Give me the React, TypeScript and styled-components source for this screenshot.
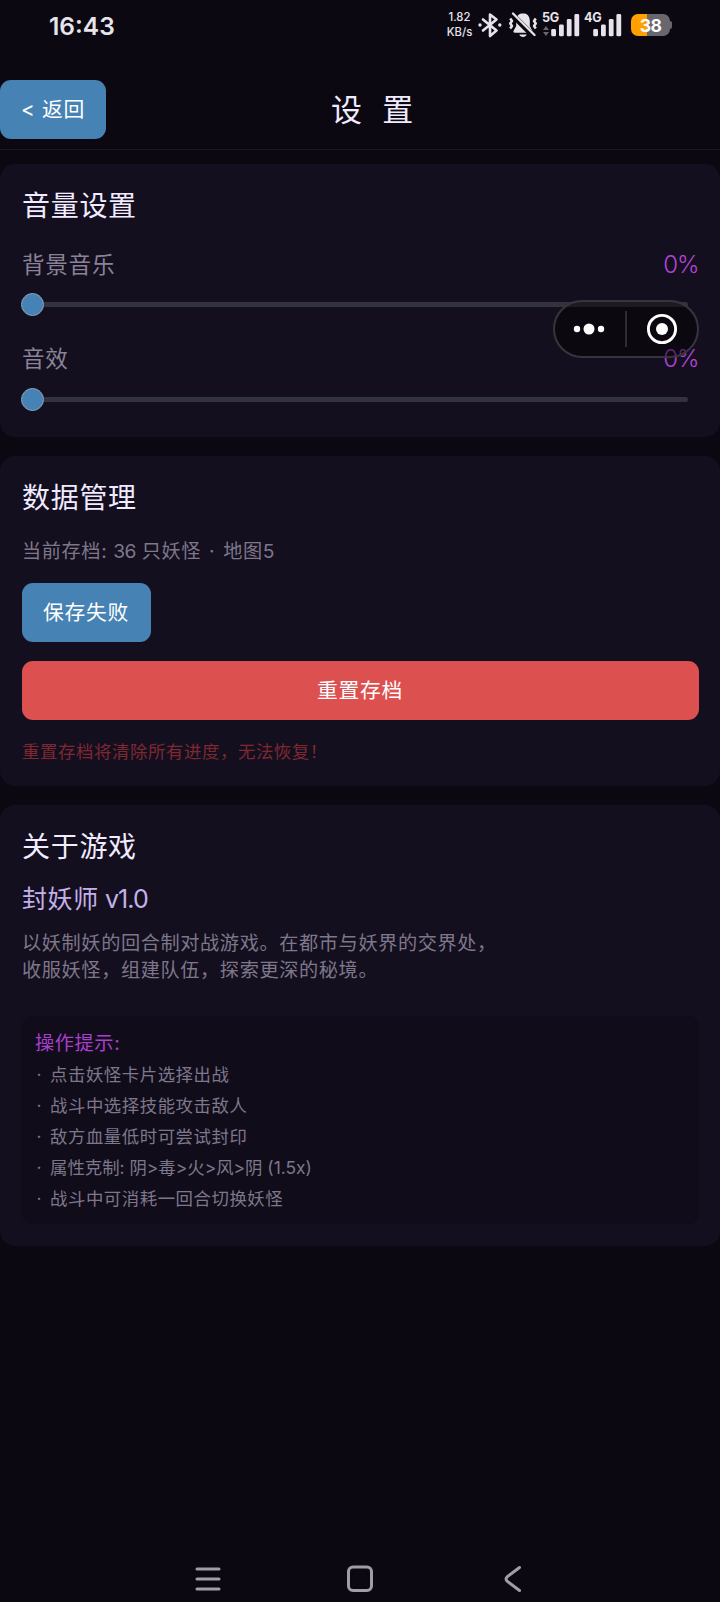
import React from "react";
import styled, { createGlobalStyle } from "styled-components";

const Global = createGlobalStyle`
  * { box-sizing: border-box; }
  body { margin: 0; background: #0b0812; }
`;

const Screen = styled.div`
  width: 720px;
  height: 1602px;
  display: flex;
  flex-direction: column;
  background: #0b0812;
  color: #f0ebff;
  font-family: Inter, "Noto Sans CJK SC", sans-serif;
  font-weight: 400;
  overflow: hidden;
  position: relative;
  white-space: nowrap;
`;

const StatusBar = styled.div`
  height: 80px;
  padding: 10px 48px 0 49px;
  display: flex;
  align-items: flex-start;
  justify-content: space-between;
  color: #e6e3ea;
`;

const Clock = styled.div`
  font-size: 24.5px;
  font-weight: 600;
  line-height: 32px;
`;

const StatusIcons = styled.div`
  display: flex;
  align-items: center;
  height: 30px;
`;

const NetSpeed = styled.div`
  width: 27px;
  margin-right: 5px;
  font-size: 11.3px;
  font-weight: 500;
  line-height: 15px;
  text-align: center;
`;

const Signals = styled.svg`
  display: block;
  font-family: Inter, sans-serif;
`;

const BellSvg = styled.svg`
  display: block;
  margin-left: 6px;
`;

const Battery = styled.div`
  width: 39px;
  height: 22px;
  margin-left: 9px;
  border-radius: 7px;
  background: linear-gradient(90deg, #ffa000 16px, #69676e 16px);
  color: #fff;
  font-size: 17.5px;
  font-weight: 700;
  line-height: 23px;
  letter-spacing: -0.6px;
  text-align: center;
`;

const BatteryTip = styled.div`
  width: 2px;
  height: 8px;
  border-radius: 0 2px 2px 0;
  background: #69676e;
`;

const Header = styled.header`
  height: 70px;
  border-bottom: 1px solid #1b1822;
  display: grid;
  grid-template-columns: 331px auto 1fr;
  align-items: start;
`;

const Button = styled.button<{ $kind?: "danger"; $wide?: boolean; $width?: number }>`
  display: block;
  width: ${(p) => (p.$wide ? "100%" : `${p.$width}px`)};
  height: 59px;
  padding: 0;
  border: 0;
  border-radius: 11px;
  background: ${(p) => (p.$kind === "danger" ? "#dc504f" : "#4682b4")};
  color: #fff;
  font-family: inherit;
  font-size: 20.8px;
  letter-spacing: 0.7px;
  line-height: 59px;
`;

const PageTitle = styled.h1`
  margin: 0;
  font-size: 31px;
  font-weight: 400;
  line-height: 59px;
  word-spacing: 11.5px;
`;

const Cards = styled.main`
  padding-top: 14px;
  display: flex;
  flex-direction: column;
  gap: 19px;
`;

const Card = styled.section<{ $height: number }>`
  height: ${(p) => p.$height}px;
  padding: 22px 21.5px 0;
  border-radius: 15px;
  background: #140f1e;
`;

const CardTitle = styled.h2`
  margin: 0;
  padding-left: 0.5px;
  font-size: 28px;
  font-weight: 400;
  line-height: 41px;
  letter-spacing: 0.7px;
`;

const VolumeRow = styled.div<{ $top: number }>`
  margin-top: ${(p) => p.$top}px;
  padding-left: 0.5px;
  display: flex;
  justify-content: space-between;
  height: 34px;
  line-height: 34px;
  font-size: 22.6px;
  letter-spacing: 0.7px;
  color: #8a8298;
`;

const Percent = styled.span`
  font-size: 24px;
  letter-spacing: -1px;
  font-weight: 300;
  color: #b243d6;
`;

const Slider = styled.div<{ $top: number }>`
  margin: ${(p) => p.$top}px 11px 0 -0.5px;
  height: 24px;
  display: flex;
  align-items: center;
`;

const Thumb = styled.div`
  width: 23px;
  height: 23px;
  border-radius: 50%;
  border: 1px solid #8aa3bb;
  background: #4682b4;
`;

const Track = styled.div`
  flex: 1;
  height: 5px;
  border-radius: 0 3px 3px 0;
  background: #33323f;
`;

const Line = styled.p<{ $size: number; $line: number; $top?: number; $color?: string }>`
  margin: ${(p) => p.$top ?? 0}px 0 0;
  padding-left: 0.5px;
  font-size: ${(p) => p.$size}px;
  line-height: ${(p) => p.$line}px;
  letter-spacing: 0.6px;
  color: ${(p) => p.$color ?? "#7e778b"};
`;

const Latin = styled.span<{ $track?: number }>`
  letter-spacing: ${(p) => p.$track ?? 0}px;
`;

const Dot = styled.span`
  padding: 0 2px;
`;

const Actions = styled.div`
  margin-top: 17px;
  display: flex;
  flex-direction: column;
  gap: 19px;
`;

const Tips = styled.div`
  margin-top: 32px;
  height: 208px;
  padding: 11px 13px;
  border-radius: 11px;
  background: #100c1a;
`;

const TipList = styled.ul`
  margin: 0;
  padding: 0;
  list-style: none;
`;

const Tip = styled.li`
  display: flex;
  height: 31px;
  line-height: 32px;
  font-size: 17.4px;
  letter-spacing: 0.55px;
  color: #7e778b;
  white-space: pre;

  &::before {
    content: "·";
    width: 13.5px;
    padding-left: 2px;
  }
`;

const Capsule = styled.div`
  position: absolute;
  left: 553px;
  top: 300px;
  width: 146px;
  height: 58px;
  border: 2px solid #36343c;
  border-radius: 29px;
  background: rgba(0, 0, 0, 0.45);
  background-clip: padding-box;
  display: grid;
  grid-template-columns: 70px 1px 1fr;
  align-items: center;
  justify-items: center;
`;

const CapsuleDivider = styled.div`
  width: 2px;
  height: 36px;
  background: #2e2c34;
`;

const MoreDots = styled.svg`
  margin-right: 3px;
`;

const NavBar = styled.nav`
  margin-top: auto;
  height: 47px;
  display: flex;
  justify-content: center;
  align-items: center;
  gap: 124.5px;
`;

const tips = [
  { text: "点击妖怪卡片选择出战" },
  { text: "战斗中选择技能攻击敌人" },
  { text: "敌方血量低时可尝试封印" },
  { text: "属性克制: 阴>毒>火>风>阴 (1.5x)", tight: true },
  { text: "战斗中可消耗一回合切换妖怪" },
];

function BluetoothIcon() {
  return (
    <svg width="24" height="26" viewBox="0 0 24 26" fill="none" stroke="#e6e3ea" strokeWidth="2.6">
      <path d="M5 7.500L18.500 18.500L12 24V2.500L18.500 7.500L5 18.500" strokeLinejoin="round" strokeLinecap="round" />
      <circle cx="2" cy="13" r="1.700" fill="#e6e3ea" stroke="none" />
      <circle cx="21.800" cy="13" r="1.700" fill="#e6e3ea" stroke="none" />
    </svg>
  );
}

function MutedBellIcon() {
  return (
    <BellSvg width="30" height="26" viewBox="0 0 30 26" fill="none">
      <path d="M15 1.200c-4.200 0-6.800 3.200-6.800 7.300V14l-2.600 4.800c-.5 1 .1 2 1.200 2h16.400c1.100 0 1.700-1 1.200-2L21.800 14V8.500c0-4.100-2.600-7.300-6.800-7.300z" fill="#e6e3ea" />
      <path d="M11.300 22.600h7.400c-.5 1.500-1.900 2.400-3.700 2.400s-3.200-.9-3.700-2.400z" fill="#e6e3ea" />
      <path d="M5 3.500L25 23.500" stroke="#0b0812" strokeWidth="5.400" />
      <path d="M5 1.500L26.500 23" stroke="#e6e3ea" strokeWidth="2.300" strokeLinecap="round" />
      <path d="M2.200 6.500L4 9L2.200 11.500L4 14L2.200 16.500M27.800 6.500L26 9L27.800 11.500L26 14L27.800 16.500" stroke="#e6e3ea" strokeWidth="2.500" strokeLinejoin="round" />
    </BellSvg>
  );
}

function SignalIcon({ label, arrows }: { label: string; arrows?: boolean }) {
  return (
    <Signals width="42" height="28" viewBox="0 0 42 28" fill="#e6e3ea">
      <text x="4" y="10.500" fontSize="12.600" fontWeight="700" letterSpacing="-0.300">{label}</text>
      {arrows && <path d="M5 19l3-4 3 4zM5 21l3 4 3-4z" fill="#69676e" />}
      <rect x="13.200" y="18" width="4.800" height="7.300" rx="1.400" />
      <rect x="21" y="13.500" width="4.800" height="11.800" rx="1.400" />
      <rect x="28.800" y="8" width="4.800" height="17.300" rx="1.400" />
      <rect x="36.400" y="3" width="4.800" height="22.300" rx="1.400" />
    </Signals>
  );
}

export default function App() {
  return (
    <>
      <Global />
      <Screen>
        <StatusBar>
          <Clock>16:43</Clock>
          <StatusIcons>
            <NetSpeed>1.82<br />KB/s</NetSpeed>
            <BluetoothIcon />
            <MutedBellIcon />
            <SignalIcon label="5G" arrows />
            <SignalIcon label="4G" />
            <Battery>38</Battery>
            <BatteryTip />
          </StatusIcons>
        </StatusBar>

        <Header>
          <Button $width={106}>&lt; 返回</Button>
          <PageTitle>设 置</PageTitle>
        </Header>

        <Cards>
          <Card $height={273}>
            <CardTitle>音量设置</CardTitle>
            <VolumeRow $top={21}>
              <span>背景音乐</span>
              <Percent>0%</Percent>
            </VolumeRow>
            <Slider $top={10}><Thumb /><Track /></Slider>
            <VolumeRow $top={26}>
              <span>音效</span>
              <Percent>0%</Percent>
            </VolumeRow>
            <Slider $top={11}><Thumb /><Track /></Slider>
          </Card>

          <Card $height={330}>
            <CardTitle>数据管理</CardTitle>
            <Line $size={19.2} $line={30} $top={17}>
              当前存档: <Latin $track={-0.7}>36</Latin> 只妖怪 <Dot>·</Dot> 地图5
            </Line>
            <Actions>
              <Button $width={129}>保存失败</Button>
              <Button $kind="danger" $wide>重置存档</Button>
            </Actions>
            <Line $size={17.4} $line={28} $top={18} $color="#7f2832">
              重置存档将清除所有进度，无法恢复！
            </Line>
          </Card>

          <Card $height={441}>
            <CardTitle>关于游戏</CardTitle>
            <Line $size={25} $line={36} $top={13} $color="#c3b1ea">
              封妖师<Latin $track={-0.9}> v1.0</Latin>
            </Line>
            <Line $size={19.2} $line={27} $top={13}>
              以妖制妖的回合制对战游戏。在都市与妖界的交界处，
              <br />
              收服妖怪，组建队伍，探索更深的秘境。
            </Line>
            <Tips>
              <Line $size={19.2} $line={32} $color="#aa3fcd">操作提示:</Line>
              <TipList>
                {tips.map(({ text, tight }) => (
                  <Tip key={text}>{tight ? <Latin $track={0}>{text}</Latin> : text}</Tip>
                ))}
              </TipList>
            </Tips>
          </Card>
        </Cards>

        <NavBar>
          <svg width="28" height="30" viewBox="0 0 28 30" stroke="#a19da8" strokeWidth="3" strokeLinecap="round">
            <path d="M3 5H25M3 15H25M3 25H25" />
          </svg>
          <svg width="28" height="30" viewBox="0 0 28 30" fill="none" stroke="#a19da8" strokeWidth="3">
            <rect x="2.500" y="3" width="23" height="23.500" rx="4.500" />
          </svg>
          <svg width="28" height="30" viewBox="0 0 28 30" fill="none" stroke="#a19da8" strokeWidth="3" strokeLinecap="round" strokeLinejoin="round">
            <path d="M20.500 3.500L8 13Q6.200 15 8 17L20.500 26.500" />
          </svg>
        </NavBar>

        <Capsule>
          <MoreDots width="32" height="12" viewBox="0 0 32 12" fill="#fff">
            <circle cx="4" cy="6" r="3.200" />
            <circle cx="16" cy="6" r="5.500" />
            <circle cx="28" cy="6" r="3.200" />
          </MoreDots>
          <CapsuleDivider />
          <svg width="32" height="32" viewBox="0 0 32 32" fill="none">
            <circle cx="16" cy="16" r="13.600" stroke="#fff" strokeWidth="2.900" />
            <circle cx="16" cy="16" r="6" fill="#fff" />
          </svg>
        </Capsule>
      </Screen>
    </>
  );
}
